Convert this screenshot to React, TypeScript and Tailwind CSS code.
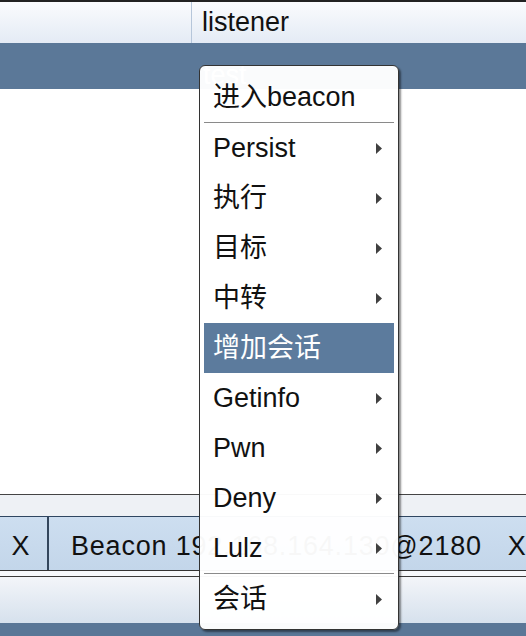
import React from "react";

type Item = { label: string; arrow?: boolean; active?: boolean; sepAfter?: boolean };

const items: Item[] = [
  { label: "进入beacon", sepAfter: true },
  { label: "Persist", arrow: true },
  { label: "执行", arrow: true },
  { label: "目标", arrow: true },
  { label: "中转", arrow: true },
  { label: "增加会话", active: true },
  { label: "Getinfo", arrow: true },
  { label: "Pwn", arrow: true },
  { label: "Deny", arrow: true },
  { label: "Lulz", arrow: true, sepAfter: true },
  { label: "会话", arrow: true },
];

const Arrow = () => (
  <svg width="6" height="11" viewBox="0 0 6 11" className="shrink-0">
    <path d="M0 0 L6 5.5 L0 11 Z" fill="#404040" />
  </svg>
);

export default function App() {
  return (
    <div className="w-[526px] h-[636px] overflow-hidden relative bg-white flex flex-col font-['Liberation_Sans','Noto_Sans_CJK_SC',sans-serif] text-[27px] text-[#111]">
      <div className="h-[2px] shrink-0 bg-[#222]" />
      <div className="h-[41px] shrink-0 flex bg-linear-to-b from-[#fafbfd] to-[#e4ebf5]">
        <div className="w-[192px] border-r border-[#b6c6da]" />
        <div className="pl-[10px] flex items-center">listener</div>
      </div>
      <div className="h-[46px] shrink-0 flex bg-[#5b7898] overflow-hidden">
        <div className="w-[193px]" />
        <div className="pl-[10px] pt-[19px] leading-[27px] text-white">test</div>
      </div>
      <div className="flex-1 bg-white" />
      <div className="h-px shrink-0 bg-[#444]" />
      <div className="h-[21px] shrink-0 bg-[#eef1f5]" />
      <div className="h-[55px] shrink-0 flex border-t border-b border-t-[#2f4661] border-b-[#333] bg-linear-to-b from-[#cddef0] to-[#c3d6ea]">
        <div className="w-[49px] border-r-2 border-[#33465c] flex items-center justify-center pt-[6px] pr-[6px]">X</div>
        <div className="pl-[22px] flex items-center pt-[6px] tracking-[0.8px] whitespace-nowrap">
          Beacon 192.168.164.130@2180
        </div>
        <div className="pl-[26px] flex items-center pt-[6px]">X</div>
      </div>
      <div className="h-[5px] shrink-0 bg-[#f6f8fb]" />
      <div className="h-px shrink-0 bg-[#3a3a3a]" />
      <div className="h-[46px] shrink-0 bg-linear-to-b from-[#f3f5f9] to-[#d6e1ed]" />
      <div className="h-[13px] shrink-0 bg-[#5a7797]" />

      <div className="absolute left-[199px] top-[65px] w-[200px] rounded-[6px] border border-[#333] bg-white/[0.97] shadow-[2px_2px_2px_rgba(0,0,0,0.45)] px-[4px] pt-[6px] pb-[5px]">
        {items.map((it) => (
          <React.Fragment key={it.label}>
            <div
              className={
                it.active
                  ? "h-[50px] flex items-center justify-between pl-[9px] pr-[12px] bg-[#5c7b9d] text-white"
                  : "h-[50px] flex items-center justify-between pl-[9px] pr-[12px]"
              }
            >
              <span className="whitespace-nowrap">{it.label}</span>
              {it.arrow ? <Arrow /> : null}
            </div>
            {it.sepAfter ? <div className="h-px bg-[#8a8a8a]" /> : null}
          </React.Fragment>
        ))}
      </div>
    </div>
  );
}
